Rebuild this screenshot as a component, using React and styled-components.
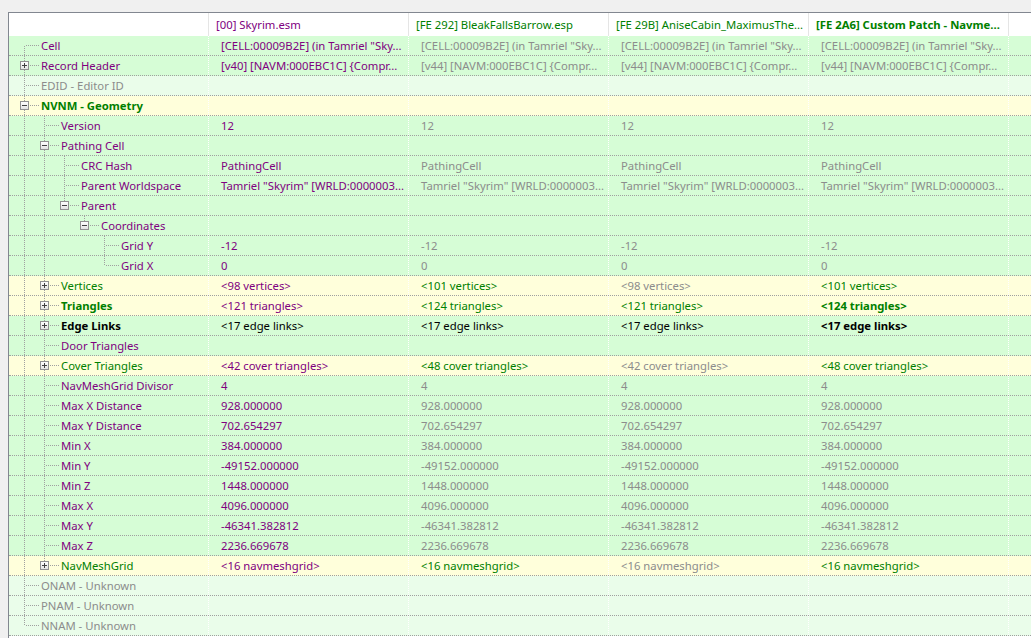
import React from "react";
import styled, { createGlobalStyle, css } from "styled-components";

const GlobalStyle = createGlobalStyle`
  html, body {
    margin: 0;
    padding: 0;
    background: #f0f0f0;
    overflow: hidden;
  }
  body {
    font-family: "Noto Sans", "Open Sans", sans-serif;
    font-size: 11.3px;
  }
`;

const INK = {
  purple: "#800080",
  green: "#008000",
  grey: "#8c8c8c",
  black: "#000000",
};

const TONE = {
  green: "#d6fdd6",
  pale: "#eafdea",
  yellow: "#ffffdb",
};

const Frame = styled.div`
  height: 100vh;
  padding: 12px 0 0 8px;
  box-sizing: border-box;
`;

const Grid = styled.div`
  height: 100%;
  background: #ffffff;
  border-top: 1px solid #828790;
  border-left: 1px solid #828790;
`;

const HeaderRow = styled.div`
  display: flex;
  height: 23px;
  background: #ffffff;
`;

const HeaderCell = styled.div`
  flex: none;
  width: 200px;
  box-sizing: border-box;
  padding-left: 7px;
  border-right: 1px solid #e5e5e5;
  line-height: 23px;
  white-space: nowrap;
  overflow: hidden;
  color: ${(p) => INK[p.$ink] || "#000"};
  font-weight: ${(p) => (p.$bold ? 700 : 400)};
`;

const HeaderFill = styled.div`
  flex: none;
  width: 22px;
  border-right: 1px solid #e5e5e5;
`;

const Row = styled.div`
  display: flex;
  height: 20px;
  box-sizing: border-box;
  border-bottom: 1px dotted #a0a0a0;
  background: ${(p) => TONE[p.$tone]};
`;

const cellBase = css`
  flex: none;
  width: 200px;
  box-sizing: border-box;
  border-right: 1px dotted #ffffff;
  line-height: 19px;
  white-space: nowrap;
  overflow: hidden;
`;

const NameCell = styled.div`
  ${cellBase};
  display: flex;
  align-items: flex-start;
`;

const NameText = styled.span`
  margin-left: 2px;
  color: ${(p) => INK[p.$ink]};
  font-weight: ${(p) => (p.$bold ? 700 : 400)};
`;

const ValueCell = styled.div`
  ${cellBase};
  padding-left: 12px;
  color: ${(p) => INK[p.$ink]};
  font-weight: ${(p) => (p.$bold ? 700 : 400)};
`;

const RowFill = styled.div`
  flex: 1;
`;

const Tree = styled.svg`
  flex: none;
  display: block;
  height: 19px;
`;

const DOT = { stroke: "#a0a0a0", strokeWidth: 1, strokeDasharray: "1 1" };

function TreeLines({ level, guides, hasPrev, hasNext, box }) {
  const w = level * 20 + 30;
  const x = level * 20 + 15.5;
  return (
    <Tree width={w} height={19} viewBox={`0 0 ${w} 19`} shapeRendering="crispEdges">
      {guides.map((on, k) =>
        on ? <line key={k} x1={k * 20 + 15.5} y1={0} x2={k * 20 + 15.5} y2={19} {...DOT} /> : null
      )}
      {hasPrev && <line x1={x} y1={0} x2={x} y2={9} {...DOT} />}
      {hasNext && <line x1={x} y1={10} x2={x} y2={19} {...DOT} />}
      <line x1={x + 1} y1={9.5} x2={level * 20 + 30} y2={9.5} {...DOT} />
      {box && (
        <g>
          <defs>
            <linearGradient id="bx" x1="0" y1="0" x2="0" y2="1">
              <stop offset="0" stopColor="#ffffff" />
              <stop offset="1" stopColor="#e2e2e2" />
            </linearGradient>
          </defs>
          <rect x={x - 4} y={5.5} width={8} height={8} fill="url(#bx)" stroke="#919191" />
          <line x1={x - 2.5} y1={9.5} x2={x + 2.5} y2={9.5} stroke="#404040" />
          {box === "+" && <line x1={x} y1={7} x2={x} y2={12} stroke="#404040" />}
        </g>
      )}
    </Tree>
  );
}

const same = (t) => [[t, "purple"], [t, "grey"], [t, "grey"], [t, "grey"]];
const split = (a, b, c) => [[a, "purple"], [b, "green"], [a, c], [b, "green"]];

const ROWS = [
  { name: "Cell", level: 0, ink: "purple", tone: "green", vals: same('[CELL:00009B2E] (in Tamriel "Sky...') },
  {
    name: "Record Header", level: 0, box: "+", ink: "purple", tone: "green",
    vals: [
      ["[v40] [NAVM:000EBC1C] {Compr...", "purple"],
      ["[v44] [NAVM:000EBC1C] {Compr...", "grey"],
      ["[v44] [NAVM:000EBC1C] {Compr...", "grey"],
      ["[v44] [NAVM:000EBC1C] {Compr...", "grey"],
    ],
  },
  { name: "EDID - Editor ID", level: 0, ink: "grey", tone: "pale" },
  { name: "NVNM - Geometry", level: 0, box: "-", ink: "green", bold: true, tone: "yellow" },
  { name: "Version", level: 1, ink: "purple", tone: "green", vals: same("12") },
  { name: "Pathing Cell", level: 1, box: "-", ink: "purple", tone: "green" },
  { name: "CRC Hash", level: 2, ink: "purple", tone: "green", vals: same("PathingCell") },
  { name: "Parent Worldspace", level: 2, ink: "purple", tone: "green", vals: same('Tamriel "Skyrim" [WRLD:0000003...') },
  { name: "Parent", level: 2, box: "-", ink: "purple", tone: "green" },
  { name: "Coordinates", level: 3, box: "-", ink: "purple", tone: "green" },
  { name: "Grid Y", level: 4, ink: "purple", tone: "green", vals: same("-12") },
  { name: "Grid X", level: 4, ink: "purple", tone: "green", vals: same("0") },
  { name: "Vertices", level: 1, box: "+", ink: "green", tone: "yellow", vals: split("<98 vertices>", "<101 vertices>", "grey") },
  {
    name: "Triangles", level: 1, box: "+", ink: "green", bold: true, tone: "yellow",
    vals: [
      ["<121 triangles>", "purple"],
      ["<124 triangles>", "green"],
      ["<121 triangles>", "green"],
      ["<124 triangles>", "green", true],
    ],
  },
  {
    name: "Edge Links", level: 1, box: "+", ink: "black", bold: true, tone: "green",
    vals: [
      ["<17 edge links>", "black"],
      ["<17 edge links>", "black"],
      ["<17 edge links>", "black"],
      ["<17 edge links>", "black", true],
    ],
  },
  { name: "Door Triangles", level: 1, ink: "purple", tone: "green" },
  { name: "Cover Triangles", level: 1, box: "+", ink: "green", tone: "yellow", vals: split("<42 cover triangles>", "<48 cover triangles>", "grey") },
  { name: "NavMeshGrid Divisor", level: 1, ink: "purple", tone: "green", vals: same("4") },
  { name: "Max X Distance", level: 1, ink: "purple", tone: "green", vals: same("928.000000") },
  { name: "Max Y Distance", level: 1, ink: "purple", tone: "green", vals: same("702.654297") },
  { name: "Min X", level: 1, ink: "purple", tone: "green", vals: same("384.000000") },
  { name: "Min Y", level: 1, ink: "purple", tone: "green", vals: same("-49152.000000") },
  { name: "Min Z", level: 1, ink: "purple", tone: "green", vals: same("1448.000000") },
  { name: "Max X", level: 1, ink: "purple", tone: "green", vals: same("4096.000000") },
  { name: "Max Y", level: 1, ink: "purple", tone: "green", vals: same("-46341.382812") },
  { name: "Max Z", level: 1, ink: "purple", tone: "green", vals: same("2236.669678") },
  { name: "NavMeshGrid", level: 1, box: "+", ink: "green", tone: "yellow", vals: split("<16 navmeshgrid>", "<16 navmeshgrid>", "grey") },
  { name: "ONAM - Unknown", level: 0, ink: "grey", tone: "pale" },
  { name: "PNAM - Unknown", level: 0, ink: "grey", tone: "pale" },
  { name: "NNAM - Unknown", level: 0, ink: "grey", tone: "pale" },
];

// does another item at `level` follow row i before the branch closes?
function continues(i, level) {
  for (let j = i + 1; j < ROWS.length; j++) {
    if (ROWS[j].level < level) return false;
    if (ROWS[j].level === level) return true;
  }
  return false;
}

const HEADERS = [
  { text: "[00] Skyrim.esm", ink: "purple" },
  { text: "[FE 292] BleakFallsBarrow.esp", ink: "green" },
  { text: "[FE 29B] AniseCabin_MaximusThe...", ink: "green" },
  { text: "[FE 2A6] Custom Patch - Navme...", ink: "green", bold: true },
];

export default function App() {
  return (
    <Frame>
      <GlobalStyle />
      <Grid>
        <HeaderRow>
          <HeaderCell />
          {HEADERS.map((h) => (
            <HeaderCell key={h.text} $ink={h.ink} $bold={h.bold}>
              {h.text}
            </HeaderCell>
          ))}
          <HeaderFill />
        </HeaderRow>
        {ROWS.map((r, i) => {
          const guides = Array.from({ length: r.level }, (_, k) => continues(i, k));
          const vals = r.vals || [["", "grey"], ["", "grey"], ["", "grey"], ["", "grey"]];
          return (
            <Row key={r.name} $tone={r.tone}>
              <NameCell>
                <TreeLines
                  level={r.level}
                  guides={guides}
                  hasPrev={i > 0}
                  hasNext={continues(i, r.level)}
                  box={r.box}
                />
                <NameText $ink={r.ink} $bold={r.bold}>
                  {r.name}
                </NameText>
              </NameCell>
              {vals.map(([t, ink, bold], c) => (
                <ValueCell key={c} $ink={ink} $bold={bold}>
                  {t}
                </ValueCell>
              ))}
              <RowFill />
            </Row>
          );
        })}
      </Grid>
    </Frame>
  );
}
